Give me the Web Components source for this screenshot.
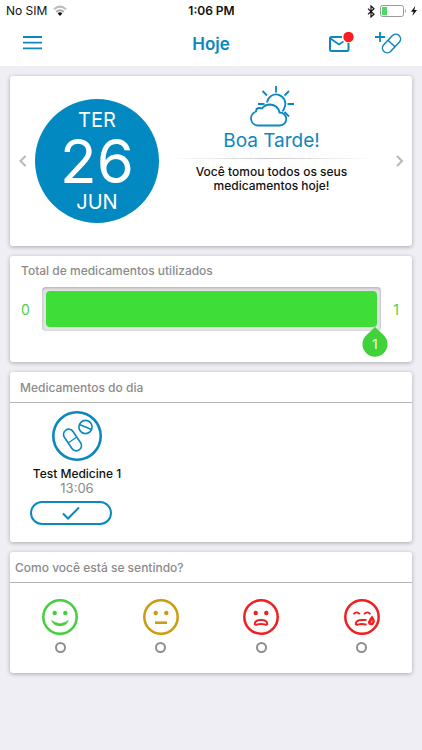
<!DOCTYPE html>
<html lang="pt-BR">
<head>
<meta charset="utf-8">
<meta name="viewport" content="width=device-width, initial-scale=1">
<title>Hoje</title>
<style>
    :root {
        --azul: #0d87bf;
        --verde: #3fdd37;
        --cinza: #8b8b8b;
    }
    body {
        margin: 0;
        min-height: 100vh;
        background-color: #efeef5;
        color: #111;
        font-family: Inter, "Liberation Sans", sans-serif;
        font-size: 12px;
    }
    main {
        display: flex;
        flex-direction: column;
        gap: 10px;
        padding: 10px;
    }
</style>
</head>
<body>
<barra-estado operadora="No SIM" hora="1:06 PM"></barra-estado>
<barra-titulo>Hoje</barra-titulo>
<main>
    <tarjeta-base>
        <resumen-dia semana="TER" dia="26" mes="JUN">
            <span slot="saludo">Boa Tarde!</span>
            Você tomou todos os seus medicamentos hoje!
        </resumen-dia>
    </tarjeta-base>
    <tarjeta-base>
        <barra-progreso valor="1" total="1">Total de medicamentos utilizados</barra-progreso>
    </tarjeta-base>
    <tarjeta-base>
        <titulo-tarjeta slot="titulo" style="--sangria: 10px">Medicamentos do dia</titulo-tarjeta>
        <lista-medicamentos>
            <item-medicamento hora="13:06">Test Medicine 1</item-medicamento>
        </lista-medicamentos>
    </tarjeta-base>
    <tarjeta-base>
        <titulo-tarjeta slot="titulo">Como você está se sentindo?</titulo-tarjeta>
        <selector-animo></selector-animo>
    </tarjeta-base>
</main>

<script>
class barraEstado extends HTMLElement {
    constructor() {
        super();
        const shadowRoot = this.attachShadow({ mode: 'open' });
        shadowRoot.innerHTML = `
            <style>
                :host {
                    display: grid;
                    grid-template-columns: 1fr auto 1fr;
                    align-items: center;
                    height: 22px;
                    padding: 0 5px 0 6px;
                    background-color: white;
                    line-height: 16px;
                }
                div {
                    display: flex;
                    align-items: center;
                    gap: 6px;
                }
                .hora {
                    font-weight: 600;
                }
                .derecha {
                    justify-content: flex-end;
                    gap: 4px;
                }
                svg {
                    display: block;
                }
            </style>
            <div>
                <span class="operadora"></span>
                <svg width="14" height="12" viewBox="0 0 14 12" fill="none" stroke-width="2">
                    <path d="M1 4.2 Q7 -1 13 4.2" stroke="#bbb"/>
                    <path d="M3.2 7 Q7 3.6 10.8 7" stroke="#aaa"/>
                    <path d="M4.6 8.2 Q7 6.2 9.4 8.2 L7 11Z" fill="#111"/>
                </svg>
            </div>
            <span class="hora"></span>
            <div class="derecha">
                <svg width="8" height="13" viewBox="0 0 8 13" fill="none" stroke="#111" stroke-width="1.2">
                    <path d="M1 3.6 L7 9.2 L4 12 V1 L7 3.8 L1 9.4"/>
                </svg>
                <svg width="28" height="12" viewBox="0 0 28 12">
                    <rect x="1.5" y=".5" width="23" height="11" rx="2" fill="none" stroke="#999"/>
                    <rect x="3" y="2" width="5" height="8" fill="#4cd964"/>
                    <path d="M26 4 Q28 6 26 8Z" fill="#999"/>
                </svg>
                <svg width="6" height="10" viewBox="0 0 6 10" fill="#111">
                    <path d="M4.3 0 L0 5.8 H2.6 L1.4 10 L6 4 H3.3Z"/>
                </svg>
            </div>
        `;
        shadowRoot.querySelector(".operadora").textContent = this.getAttribute('operadora');
        shadowRoot.querySelector(".hora").textContent = this.getAttribute('hora');
    }
}
customElements.define("barra-estado", barraEstado);

class barraTitulo extends HTMLElement {
    constructor() {
        super();
        const shadowRoot = this.attachShadow({ mode: 'open' });
        shadowRoot.innerHTML = `
            <style>
                :host {
                    display: grid;
                    grid-template-columns: 1fr auto 1fr;
                    align-items: center;
                    height: 44px;
                    padding: 0 20px;
                    background-color: white;
                    color: var(--azul);
                }
                h1 {
                    margin: 0;
                    font-size: 17px;
                    font-weight: 600;
                }
                .acciones {
                    display: flex;
                    justify-content: flex-end;
                    gap: 20px;
                }
                button {
                    display: block;
                    justify-self: start;
                    padding: 0;
                    border: none;
                    background: none;
                    color: inherit;
                    cursor: pointer;
                }
                svg {
                    display: block;
                    fill: none;
                    stroke: currentColor;
                }
            </style>
            <button aria-label="Menu">
                <svg width="24" height="24" viewBox="0 0 24 24" stroke-width="1.800">
                    <path d="M3 5h19M3 10.700h19M3 16.400h19"/>
                </svg>
            </button>
            <h1><slot></slot></h1>
            <div class="acciones">
                <button aria-label="Mensagens">
                    <svg width="26" height="24" viewBox="0 0 26 24" stroke-width="2">
                        <path d="M14 5H3.500Q2 5 2 6.500V17.500Q2 19 3.500 19H19Q20.500 19 20.500 17.500V11"/>
                        <path d="M2.500 6.500 Q6 9 11 12.500 Q13 11 15.500 9.500" stroke-width="1.600"/>
                        <circle cx="20.500" cy="5" r="5.200" fill="#fb1c22" stroke="none"/>
                    </svg>
                </button>
                <button aria-label="Adicionar medicamento">
                    <svg width="28" height="24" viewBox="0 0 28 24" stroke-width="1.500">
                        <path d="M1 5h10M6 0v10" stroke-width="1.800"/>
                        <g transform="rotate(43 17.500 11.500)">
                            <rect x="12.700" y=".500" width="9.600" height="22" rx="4.800"/>
                            <path d="M12.700 11.500h9.600"/>
                        </g>
                    </svg>
                </button>
            </div>
        `;
    }
}
customElements.define("barra-titulo", barraTitulo);

class tarjetaBase extends HTMLElement {
    constructor() {
        super();
        const shadowRoot = this.attachShadow({ mode: 'open' });
        shadowRoot.innerHTML = `
            <style>
                :host {
                    display: block;
                    border-radius: 3px;
                    background-color: white;
                    box-shadow: 0 1px 4px rgba(0, 0, 0, 0.3);
                }
            </style>
            <slot name="titulo"></slot>
            <slot></slot>
        `;
    }
}
customElements.define("tarjeta-base", tarjetaBase);

class tituloTarjeta extends HTMLElement {
    constructor() {
        super();
        const shadowRoot = this.attachShadow({ mode: 'open' });
        shadowRoot.innerHTML = `
            <style>
                :host {
                    display: block;
                    border-bottom: 1px solid #b4b4b4;
                    color: var(--cinza);
                }
                h2 {
                    margin: 0;
                    padding: 8px var(--sangria, 5px) 6px;
                    font-size: 12px;
                    font-weight: 500;
                    line-height: 16px;
                }
            </style>
            <h2><slot></slot></h2>
        `;
    }
}
customElements.define("titulo-tarjeta", tituloTarjeta);

class resumenDia extends HTMLElement {
    constructor() {
        super();
        const shadowRoot = this.attachShadow({ mode: 'open' });
        shadowRoot.innerHTML = `
            <style>
                :host {
                    display: grid;
                    grid-template-columns: 25px 124px 1fr 28px;
                    align-items: center;
                }
                button {
                    display: flex;
                    justify-content: center;
                    padding: 8px 0;
                    border: none;
                    background: none;
                    cursor: pointer;
                }
                .siguiente {
                    padding-left: 4px;
                }
                .fecha {
                    display: flex;
                    flex-direction: column;
                    align-items: center;
                    justify-content: center;
                    height: 124px;
                    margin: 23px 0;
                    border-radius: 50%;
                    background-color: #0389c2;
                    color: white;
                    font-size: 20px;
                    line-height: 24px;
                }
                .dia {
                    font-size: 60px;
                    line-height: 58px;
                }
                .mensaje {
                    align-self: start;
                    padding-top: 9px;
                    font-weight: 500;
                    line-height: 14px;
                    text-align: center;
                }
                .mensaje svg {
                    display: block;
                    margin: 0 auto;
                    color: var(--azul);
                }
                h2 {
                    margin: 0;
                    color: var(--azul);
                    font-size: 19px;
                    font-weight: 400;
                    line-height: 26px;
                }
                hr {
                    height: 1px;
                    margin: 4px 10px 6px;
                    border: none;
                    background: linear-gradient(to right, transparent, #ccc, transparent);
                }
            </style>
            <button class="anterior" aria-label="Dia anterior">
                <svg width="10" height="14" viewBox="0 0 10 14" fill="none" stroke="#b8b8b8" stroke-width="2">
                    <path d="M7.500 2 L2.500 7 L7.500 12"/>
                </svg>
            </button>
            <div class="fecha">
                <span class="semana"></span>
                <span class="dia"></span>
                <span class="mes"></span>
            </div>
            <div class="mensaje">
                <svg width="46" height="43" viewBox="0 0 46 43" fill="none" stroke="currentColor" stroke-width="1.800">
                    <path d="M27 1v6.500M13.500 6l4.500 4.500M40 6l-4.500 4.500M9 19h6.500M38.500 19H45M35.500 27l4.500 4.500"/>
                    <path d="M18 17.500A9.200 9.200 0 1 1 35.500 22.500Q35 24.500 33.500 26.500"/>
                    <path d="M8.500 40.500A7.200 7.200 0 0 1 7 26.500Q7 23 10.500 23Q12 23 13 23.500Q16 19.500 21 19.500Q29 20 30.500 27.500A6.500 6.500 0 0 1 31 40.500Z" fill="white"/>
                </svg>
                <h2><slot name="saludo"></slot></h2>
                <hr>
                <slot></slot>
            </div>
            <button class="siguiente" aria-label="Próximo dia">
                <svg width="10" height="14" viewBox="0 0 10 14" fill="none" stroke="#b8b8b8" stroke-width="2">
                    <path d="M2 2 L7 7 L2 12"/>
                </svg>
            </button>
        `;
        for (const parte of ["semana", "dia", "mes"]) {
            shadowRoot.querySelector("." + parte).textContent = this.getAttribute(parte);
        }
    }
}
customElements.define("resumen-dia", resumenDia);

class barraProgreso extends HTMLElement {
    constructor() {
        super();
        const shadowRoot = this.attachShadow({ mode: 'open' });
        const valor = this.getAttribute('valor');
        const total = this.getAttribute('total');
        shadowRoot.innerHTML = `
            <style>
                :host {
                    display: block;
                    padding: 7px 11px 31px;
                }
                label {
                    display: block;
                    color: var(--cinza);
                    font-weight: 500;
                    line-height: 16px;
                }
                .fila {
                    display: grid;
                    grid-template-columns: 21px 1fr 20px;
                    align-items: center;
                    margin-top: 8px;
                    color: #4bd245;
                    font-size: 14px;
                }
                .total {
                    padding-right: 2px;
                    text-align: right;
                }
                .pista {
                    position: relative;
                    box-sizing: border-box;
                    height: 44px;
                    padding: 4px;
                    border-radius: 4px;
                    background-color: #e4e4e6;
                    box-shadow: inset 0 1px 3px rgba(0, 0, 0, 0.25);
                }
                progress {
                    display: block;
                    width: 100%;
                    height: 36px;
                    appearance: none;
                    border: none;
                    background: none;
                }
                progress::-webkit-progress-bar {
                    background: none;
                }
                progress::-webkit-progress-value {
                    border-radius: 4px;
                    background-color: var(--verde);
                }
                .marca {
                    position: absolute;
                    top: 40px;
                    right: -7px;
                    display: block;
                    width: 26px;
                    height: 30px;
                    color: white;
                    font-size: 13px;
                    line-height: 34px;
                    text-align: center;
                }
                .marca svg {
                    position: absolute;
                    inset: 0;
                }
                .marca span {
                    position: relative;
                }
            </style>
            <label for="avance"><slot></slot></label>
            <div class="fila">
                <span>0</span>
                <div class="pista">
                    <progress id="avance" value="${valor}" max="${total}"></progress>
                    <div class="marca">
                        <svg width="26" height="30" viewBox="0 0 26 30" fill="#41d239">
                            <path d="M13 0 Q14 .500 14.500 1.500L21.500 8A12.500 12.500 0 1 1 4.500 8L11.500 1.500Q12 .500 13 0Z"/>
                        </svg>
                        <span>${valor}</span>
                    </div>
                </div>
                <span class="total">${total}</span>
            </div>
        `;
    }
}
customElements.define("barra-progreso", barraProgreso);

class listaMedicamentos extends HTMLElement {
    constructor() {
        super();
        const shadowRoot = this.attachShadow({ mode: 'open' });
        shadowRoot.innerHTML = `
            <style>
                :host {
                    display: flex;
                    flex-wrap: wrap;
                    padding: 8px 20px 17px;
                }
            </style>
            <slot></slot>
        `;
    }
}
customElements.define("lista-medicamentos", listaMedicamentos);

class itemMedicamento extends HTMLElement {
    constructor() {
        super();
        const shadowRoot = this.attachShadow({ mode: 'open' });
        shadowRoot.innerHTML = `
            <style>
                :host {
                    display: flex;
                    flex-direction: column;
                    align-items: center;
                    width: 94px;
                    line-height: 14px;
                }
                svg {
                    display: block;
                    color: var(--azul);
                }
                .nombre {
                    margin-top: 6px;
                    font-weight: 500;
                }
                .hora {
                    color: var(--cinza);
                    font-size: 13px;
                }
                button {
                    display: flex;
                    align-items: center;
                    align-self: flex-start;
                    justify-content: center;
                    width: 82px;
                    height: 24px;
                    margin-top: 6px;
                    border: 2px solid var(--azul);
                    border-radius: 12px;
                    background-color: white;
                    cursor: pointer;
                }
            </style>
            <svg width="50" height="50" viewBox="0 0 50 50" fill="none" stroke="currentColor" stroke-width="1.600">
                <circle cx="25" cy="25" r="23.700" stroke-width="2.600"/>
                <circle cx="33.500" cy="16" r="6.600"/>
                <path d="M27.500 13.500l12 5"/>
                <g transform="rotate(-34 20.500 29)">
                    <rect x="15.300" y="17" width="10.400" height="24" rx="5.200"/>
                    <path d="M15.300 29h10.400" stroke-width="1.200"/>
                </g>
            </svg>
            <span class="nombre"><slot></slot></span>
            <span class="hora"></span>
            <button aria-label="Confirmar">
                <svg width="18" height="14" viewBox="0 0 18 14" fill="none" stroke="currentColor" stroke-width="2">
                    <path d="M1 7.500L6 12.500L17 1.500"/>
                </svg>
            </button>
        `;
        shadowRoot.querySelector(".hora").textContent = this.getAttribute('hora');
    }
}
customElements.define("item-medicamento", itemMedicamento);

const OJOS = `<circle cx="12.700" cy="14" r="2.200" fill="currentColor" stroke="none"/>
    <circle cx="23.300" cy="14" r="2.200" fill="currentColor" stroke="none"/>`;

const ANIMOS = [
    { nombre: "Bem", color: "#43d03c",
      cara: OJOS + `<path d="M9 20.800Q18 28 27 20.800Q24.500 27.200 18 27.200Q11.500 27.200 9 20.800Z" fill="currentColor" stroke="none"/>` },
    { nombre: "Normal", color: "#cb9c0d",
      cara: OJOS + `<path d="M12 23.700h12" stroke-width="2.600"/>` },
    { nombre: "Mal", color: "#f01f22",
      cara: OJOS + `<path d="M11.800 25.200Q11.500 21 18 21Q24.500 21 24.200 25.200Q23.500 26.300 21.500 25.400Q18 24.400 14.500 25.400Q12.500 26.300 11.800 25.200Z" stroke-width="2"/>` },
    { nombre: "Muito mal", color: "#f01f22",
      cara: `<path d="M9.500 15.200Q12.500 11.500 15.800 15.200M20 15.200Q23.500 11.500 26.500 15.200" stroke-width="1.800"/>
        <path d="M22.500 25.700Q18 24.400 14.500 25.400Q12.500 26.300 11.800 25.200Q11.500 21 18 21H22.500" stroke-width="2"/>
        <path d="M28 16.500Q31.500 20.500 30.700 23.500Q29.800 26.300 27 26.300Q23.800 26 24 22.800Q25 20 28 16.500Z" fill="currentColor" stroke="none"/>
        <path d="M28 21.500Q28.300 23 27 24" stroke="white" stroke-width=".700"/>` }
];

class selectorAnimo extends HTMLElement {
    constructor() {
        super();
        const shadowRoot = this.attachShadow({ mode: 'open' });
        shadowRoot.innerHTML = `
            <style>
                :host {
                    display: grid;
                    grid-template-columns: repeat(4, 1fr);
                    padding: 16px 0 20px;
                }
                label {
                    display: flex;
                    flex-direction: column;
                    align-items: center;
                    gap: 7px;
                    cursor: pointer;
                }
                svg {
                    display: block;
                }
                input {
                    box-sizing: border-box;
                    width: 11px;
                    height: 11px;
                    margin: 0;
                    appearance: none;
                    border: 2px solid #8e8e8e;
                    border-radius: 50%;
                    background-color: white;
                }
                input:checked {
                    background-color: var(--azul);
                }
            </style>
        `;
        for (const animo of ANIMOS) {
            const opcion = document.createElement("label");
            opcion.style.color = animo.color;
            opcion.innerHTML = `
                <svg width="36" height="36" viewBox="0 0 36 36" fill="none" stroke="currentColor">
                    <circle cx="18" cy="18" r="16.700" stroke-width="2.500"/>
                    ${animo.cara}
                </svg>
                <input type="radio" name="animo" aria-label="${animo.nombre}">
            `;
            shadowRoot.appendChild(opcion);
        }
    }
}
customElements.define("selector-animo", selectorAnimo);
</script>
</body>
</html>
